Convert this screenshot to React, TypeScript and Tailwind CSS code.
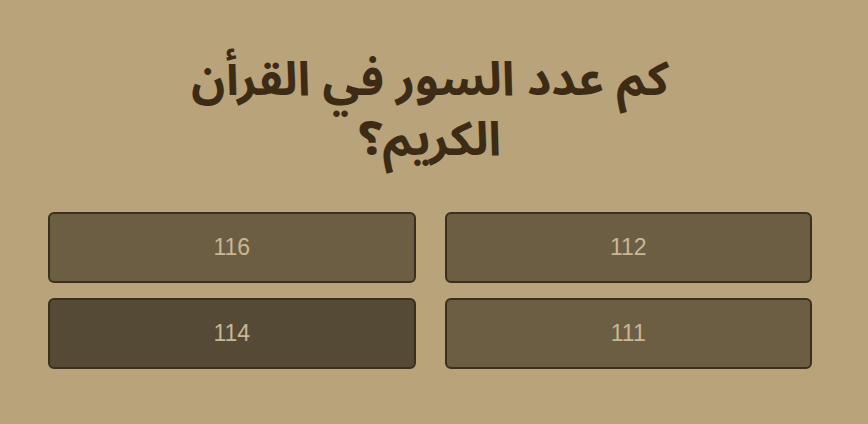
import React from 'react';

const answers = [
    { label: '112', active: false },
    { label: '116', active: false },
    { label: '111', active: false },
    { label: '114', active: true },
];

const App = () => {
    return (
        <div
            dir="rtl"
            className="w-full h-[424px] bg-[#b9a37a] pt-[50px] pl-[48px] pr-[56px]"
            style={{ fontFamily: '"Noto Sans Arabic", "Noto Sans", sans-serif' }}
        >
            <h1 className="mx-auto w-[560px] text-center text-[47px] leading-[60px] font-bold text-[#3d2b15]">
                كم عدد السور في القرأن الكريم؟
            </h1>
            <div className="mt-[42px] grid grid-cols-2 gap-x-[29px] gap-y-[15px]">
                {answers.map((a) => (
                    <button
                        key={a.label}
                        className={`h-[71px] rounded-[6px] border-2 border-[#3b2f1d] text-[23px] text-[#c8b796] ${a.active ? 'bg-[#554a35]' : 'bg-[#6c5e43]'}`}
                        style={{ fontFamily: '"Liberation Sans", Arial, sans-serif' }}
                    >
                        {a.label}
                    </button>
                ))}
            </div>
        </div>
    );
};

export default App;
